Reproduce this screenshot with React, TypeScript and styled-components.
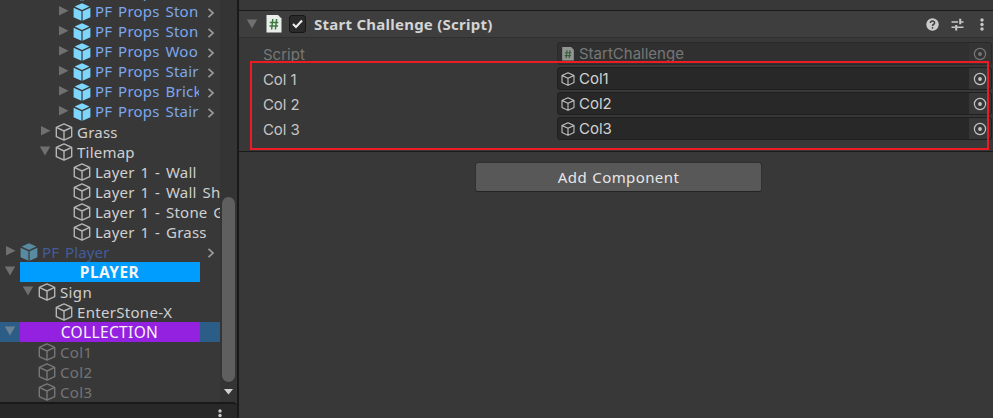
import React from "react";
import styled, { createGlobalStyle } from "styled-components";

const Global = createGlobalStyle`
  *{box-sizing:border-box}
  html,body{margin:0;padding:0;background:#383838;overflow:hidden}
`;
const Window = styled.div`
  display:flex;width:993px;height:418px;overflow:hidden;background:#383838;
  font-family:"Noto Sans","Open Sans",sans-serif;color:#cfcfcf;
`;
const Side = styled.div`
  width:239px;flex:none;display:flex;flex-direction:column;border-right:2px solid #191919;
`;
const Hierarchy = styled.div`display:flex;height:402px;flex:none;overflow:hidden;`;
const Tree = styled.div`width:220px;height:402px;display:flex;flex-direction:column;justify-content:flex-end;overflow:hidden;flex:none;`;
const Row = styled.div<{ $level: number; $selected?: boolean }>`
  height:20px;flex:none;display:flex;align-items:center;overflow:hidden;
  padding-left:${p => Math.round(p.$level * 17.7)}px;
  background:${p => (p.$selected ? "#2c5d87" : "transparent")};
`;
const ArrowSlot = styled.span`width:20px;height:20px;flex:none;display:flex;justify-content:center;padding-top:3px;svg{display:block}`;
const IconSlot = styled.span`width:18px;height:20px;flex:none;display:flex;align-items:center;svg{display:block}`;
const Name = styled.span<{ $color: string; $space: number; $raised?: boolean }>`
  margin-left:4px;flex:1;min-width:0;overflow:hidden;white-space:nowrap;word-spacing:1.7px;
  font-size:15px;line-height:20px;color:${p => p.$color};letter-spacing:${p => p.$space}px;
  padding-bottom:${p => (p.$raised ? 2 : 0)}px;
`;
const Enter = styled.span`width:21px;height:20px;flex:none;display:flex;align-items:center;padding:2px 0 0 8px;`;
const Band = styled.span<{ $bg: string; $bold?: boolean; $space: number }>`
  width:180px;height:20px;flex:none;background:${p => p.$bg};color:#f4f4f4;
  font-size:15.5px;line-height:20px;text-align:center;letter-spacing:${p => p.$space}px;
  font-weight:${p => (p.$bold ? 700 : 400)};padding-right:1px;
`;
const ScrollBar = styled.div`
  width:17px;height:402px;background:#343434;display:flex;flex-direction:column;align-items:center;justify-content:flex-end;
`;
const Thumb = styled.div`width:13px;height:185px;border-radius:6.5px;background:#5f5f5f;flex:none;`;
const ScrollArrow = styled.div`height:20px;display:flex;align-items:center;`;
const SideFooter = styled.div`
  flex:1;background:#282828;border-top:2px solid #191919;border-top-right-radius:4px;
  display:flex;justify-content:flex-end;padding:5px 15px 0 0;
`;
const Inspector = styled.div`position:relative;flex:1;display:flex;flex-direction:column;min-width:0;`;
const Header = styled.div`
  margin-top:10px;height:28px;flex:none;background:#3e3e3e;border-top:1px solid #1a1a1a;border-bottom:1px solid #303030;
  display:flex;align-items:center;padding:0 9px 0 7px;
`;
const ScriptIcon = styled.span`width:16px;height:18px;margin-left:8px;display:flex;`;
const Check = styled.span`
  width:17px;height:18px;margin-left:7px;background:#2a2a2a;border:1px solid #171717;border-radius:3px;
  display:flex;align-items:center;justify-content:center;
`;
const Title = styled.span`margin-left:8px;flex:1;font-size:15px;font-weight:700;color:#d4d4d4;letter-spacing:.25px;line-height:22px;white-space:nowrap;`;
const HeaderTools = styled.span`display:flex;align-items:center;gap:12px;svg{display:block}svg:last-child{margin-left:4px}`;
const Fields = styled.div`
  height:114px;flex:none;padding:4px 1px 0 24px;display:flex;flex-direction:column;gap:2px;border-bottom:1px solid #1a1a1a;
`;
const Field = styled.div<{ $dim?: boolean }>`
  height:23px;display:flex;align-items:center;font-family:Inter,"Liberation Sans",sans-serif;font-size:15px;
  color:${p => (p.$dim ? "#777" : "#c6c6c6")};
`;
const Label = styled.span<{ $space: number }>`width:294px;flex:none;padding-top:2px;letter-spacing:${p => p.$space}px;`;
const ObjectBox = styled.span<{ $dim?: boolean }>`
  flex:1;height:23px;display:flex;align-items:center;border:1px solid ${p => (p.$dim ? "#292929" : "#1f1f1f")};
  border-radius:3px;background:${p => (p.$dim ? "#303030" : "#282828")};overflow:hidden;padding-left:3px;
  svg{display:block;flex:none}
`;
const Value = styled.span<{ $dim?: boolean; $space: number }>`
  flex:1;margin-left:4px;color:${p => (p.$dim ? "#777" : "#d2d2d2")};letter-spacing:${p => p.$space}px;line-height:21px;
`;
const Picker = styled.span<{ $dim?: boolean }>`
  width:22px;height:21px;background:${p => (p.$dim ? "#343434" : "#373737")};display:flex;align-items:center;justify-content:center;
`;
const Highlight = styled.div`position:absolute;left:11px;top:61px;width:739px;height:89px;border:2px solid #ed1c24;`;
const AddButton = styled.button`
  margin:10px 0 0 236px;width:287px;height:30px;flex:none;padding:0;border:1px solid #303030;border-bottom-color:#242424;border-radius:3px;
  background:#585858;color:#e6e6e6;font:15px/27px "Noto Sans",sans-serif;letter-spacing:.4px;word-spacing:1px;
`;

function Arrow({ open, color = "#707070" }: { open?: boolean; color?: string }) {
  return <svg width="12" height="12" viewBox="0 0 12 12"><path d={open ? "M.8 1.5H11.2L6 10.5Z" : "M2 1L11.5 5.8L2 10.6Z"} fill={color} /></svg>;
}
function Cube({ size = 18, color = "#c4c4c4", solid }: { size?: number; color?: string; solid?: boolean }) {
  return (
    <svg width={size} height={size} viewBox="0 0 18 18">
      {solid
        ? <><path d="M9 .2L16.4 3.5L9 6.9L1.6 3.5Z" fill={color} /><path d="M.6 4.7L8.4 8.2V17.8L.6 14.2ZM17.4 4.7L9.6 8.2V17.8L17.4 14.2Z" fill={color} /></>
        : <path d="M9 .9L16.7 4.4V13.6L9 17.2L1.3 13.6V4.4ZM1.3 4.4L9 8L16.7 4.4M9 8V17.2" fill="none" stroke={color} strokeWidth="1.4" strokeLinejoin="round" />}
    </svg>
  );
}
function Script({ w, h, paper, ink }: { w: number; h: number; paper: string; ink: string }) {
  return (
    <svg width={w} height={h} viewBox="0 0 16 18">
      <path d="M1 0H12L15.5 3.5V17.5H.5V.5Z" fill={paper} />
      <path d="M6.8 4L5.6 14.5M10.6 4L9.4 14.5M3.8 7.4H12.3M3.5 11H12" stroke={ink} strokeWidth="1.5" />
    </svg>
  );
}
function Dots() {
  return <svg width="4" height="13" viewBox="0 0 4 13" fill="#c8c8c8"><circle cx="2" cy="2" r="1.7" /><circle cx="2" cy="6.5" r="1.7" /><circle cx="2" cy="11" r="1.7" /></svg>;
}
function Target({ color }: { color: string }) {
  return <svg width="14" height="14" viewBox="0 0 14 14"><circle cx="7" cy="7" r="5.6" fill="none" stroke={color} strokeWidth="1.2" /><circle cx="7" cy="7" r="1.9" fill={color} /></svg>;
}

type Item = { name: string; level: number; arrow?: "open" | "closed"; prefab?: boolean; dim?: boolean; enter?: boolean; space?: number; band?: string; bold?: boolean; selected?: boolean };
const prefab = (name: string): Item => ({ name, level: 3, arrow: "closed", prefab: true, enter: true, space: 0.22 });
const items: Item[] = [
  prefab("PF Props Ston"), prefab("PF Props Ston"), prefab("PF Props Ston"), prefab("PF Props Woo"), prefab("PF Props Stair"), prefab("PF Props Brick"), prefab("PF Props Stair"),
  { name: "Grass", level: 2, arrow: "closed" },
  { name: "Tilemap", level: 2, arrow: "open" },
  { name: "Layer 1 - Wall", level: 3 },
  { name: "Layer 1 - Wall Sh", level: 3 },
  { name: "Layer 1 - Stone G", level: 3 },
  { name: "Layer 1 - Grass", level: 3 },
  { name: "PF Player", level: 0, arrow: "closed", prefab: true, dim: true, enter: true, space: 0.15 },
  { name: "PLAYER", level: 0, arrow: "open", band: "#009dff", bold: true, space: 0.45 },
  { name: "Sign", level: 1, arrow: "open", space: 0.35 },
  { name: "EnterStone-X", level: 2, space: 0.3 },
  { name: "COLLECTION", level: 0, arrow: "open", band: "#9420e0", selected: true, space: 0.35 },
  { name: "Col1", level: 1, dim: true, space: 0.35 },
  { name: "Col2", level: 1, dim: true, space: 0.35 },
  { name: "Col3", level: 1, dim: true, space: 0.35 },
];

function TreeRow({ item }: { item: Item }) {
  const text = item.prefab ? (item.dim ? "#435c99" : "#7da7ec") : item.dim ? "#757575" : "#d0d0d0";
  const icon = item.prefab ? (item.dim ? "#588aa1" : "#7fd6fd") : item.dim ? "#777" : "#b5b5b5";
  return (
    <Row $level={item.level} $selected={item.selected}>
      <ArrowSlot>{item.arrow && <Arrow open={item.arrow === "open"} color={item.selected ? "#6b8294" : "#707070"} />}</ArrowSlot>
      {item.band
        ? <Band $bg={item.band} $bold={item.bold} $space={item.space ?? 0}>{item.name}</Band>
        : <><IconSlot><Cube solid={item.prefab} color={icon} /></IconSlot><Name $color={text} $space={item.space ?? 0.22} $raised={item.prefab && !item.dim}>{item.name}</Name></>}
      {item.enter && <Enter><svg width="8" height="10" viewBox="0 0 8 10"><path d="M1.5 .8L6 5L1.5 9.2" fill="none" stroke="#9c9c9c" strokeWidth="1.7" /></svg></Enter>}
    </Row>
  );
}

export default function App() {
  return (
    <Window>
      <Global />
      <Side>
        <Hierarchy>
          <Tree>{items.map((item, i) => <TreeRow key={i} item={item} />)}</Tree>
          <ScrollBar>
            <Thumb />
            <ScrollArrow><svg width="9" height="6" viewBox="0 0 9 6"><path d="M0 0H9L4.5 5.5Z" fill="#d0d0d0" /></svg></ScrollArrow>
          </ScrollBar>
        </Hierarchy>
        <SideFooter><Dots /></SideFooter>
      </Side>
      <Inspector>
        <Header>
          <Arrow open />
          <ScriptIcon><Script w={16} h={18} paper="#e9eeea" ink="#3d7742" /></ScriptIcon>
          <Check><svg width="13" height="12" viewBox="0 0 13 12"><path d="M2 6L5 9L11 2.5" fill="none" stroke="#f0f0f0" strokeWidth="2" /></svg></Check>
          <Title>Start Challenge (Script)</Title>
          <HeaderTools>
            <svg width="13" height="13" viewBox="0 0 13 13"><circle cx="6.5" cy="6.5" r="6.2" fill="#cacaca" /><path d="M4.4 5Q4.5 3.1 6.5 3.1Q8.6 3.1 8.6 4.9Q8.6 5.8 7.3 6.5Q6.5 7 6.5 8" fill="none" stroke="#3e3e3e" strokeWidth="1.5" /><circle cx="6.5" cy="9.8" r=".9" fill="#3e3e3e" /></svg>
            <svg width="13" height="13" viewBox="0 0 13 13" fill="none" stroke="#c8c8c8" strokeWidth="1.4"><path d="M.5 4H7M9 4H12.5M.5 9.2H4M6 9.2H12.5" /><path d="M9.2 .8V6.2M5.2 7V12.5" strokeWidth="2" /></svg>
            <Dots />
          </HeaderTools>
        </Header>
        <Fields>
          <Field $dim>
            <Label $space={0}>Script</Label>
            <ObjectBox $dim><Script w={14} h={14} paper="#929692" ink="#3c5d40" /><Value $dim $space={0}>StartChallenge</Value><Picker $dim><Target color="#777" /></Picker></ObjectBox>
          </Field>
          {[1, 2, 3].map(n => (
            <Field key={n}>
              <Label $space={-0.1}>Col {n}</Label>
              <ObjectBox><Cube size={14} /><Value $space={0}>Col{n}</Value><Picker><Target color="#c4c4c4" /></Picker></ObjectBox>
            </Field>
          ))}
        </Fields>
        <AddButton>Add Component</AddButton>
        <Highlight />
      </Inspector>
    </Window>
  );
}
